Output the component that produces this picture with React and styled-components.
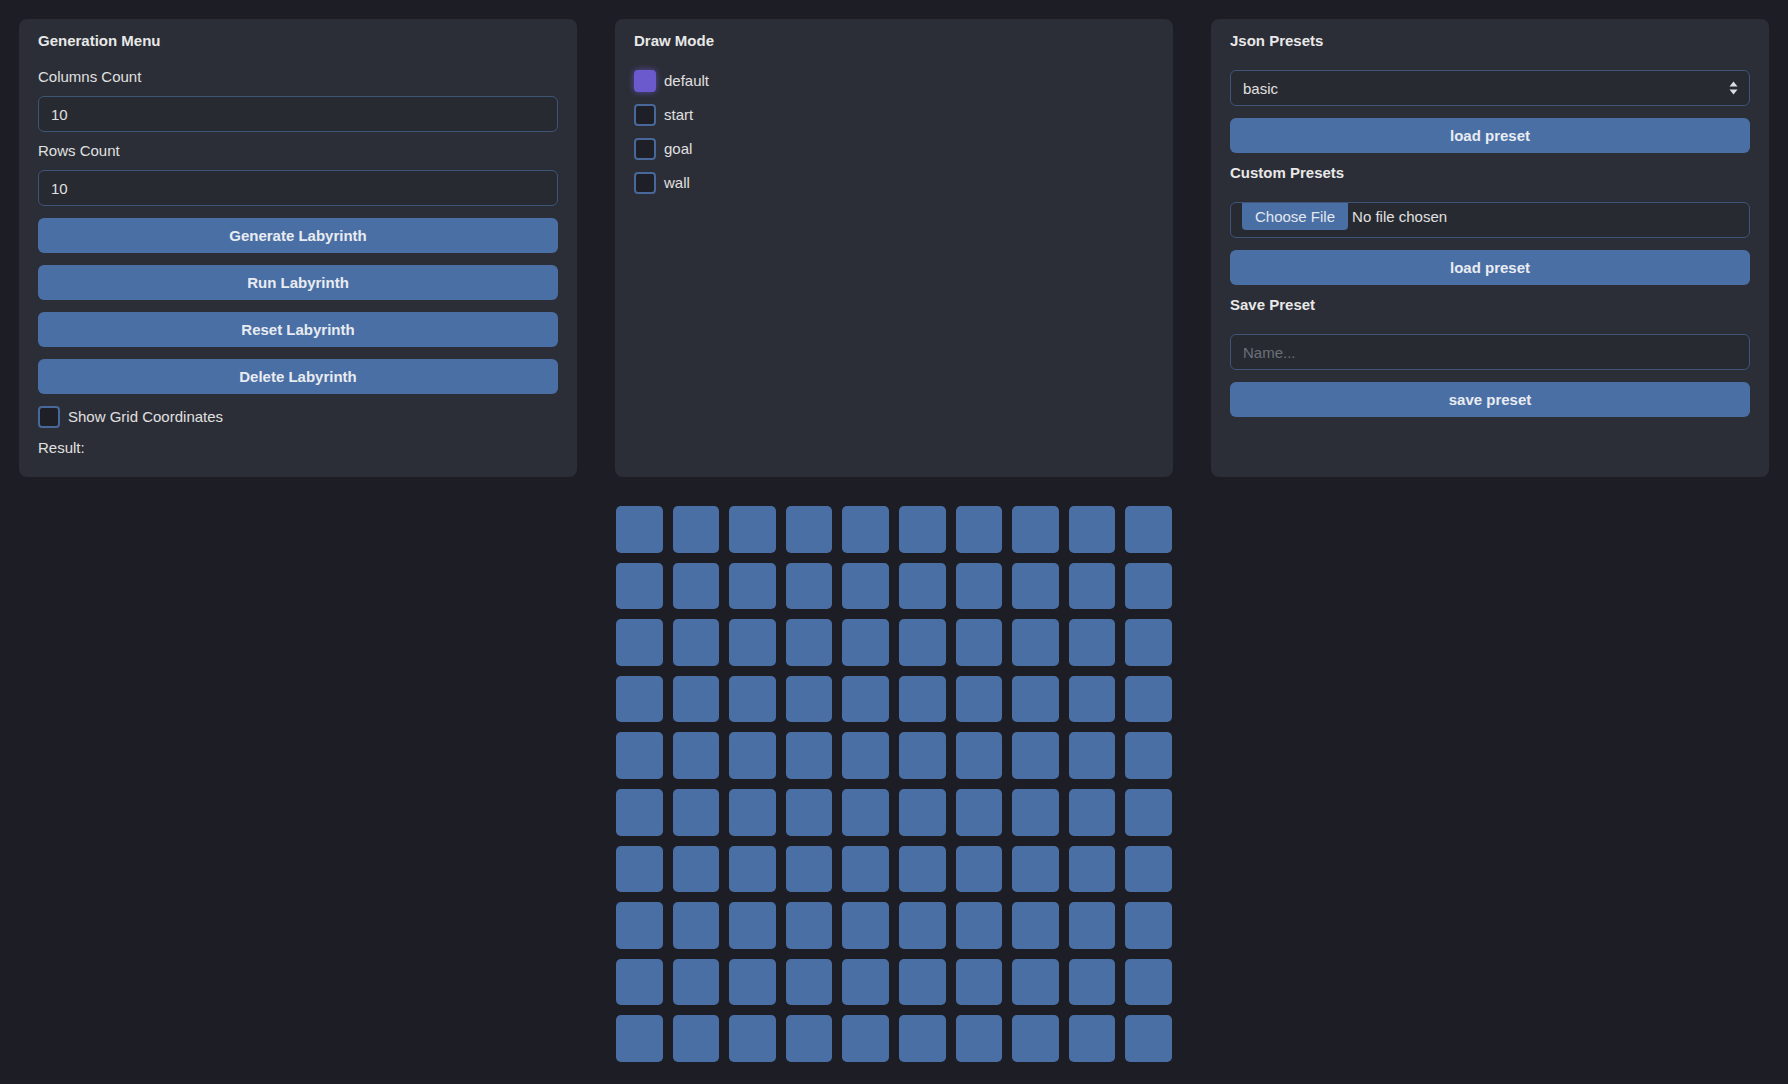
import React, { useState } from 'react';
import styled, { createGlobalStyle } from 'styled-components';

const GlobalStyle = createGlobalStyle`
  html, body {
    margin: 0;
    padding: 0;
    background: #1d1e25;
  }
  body {
    font-family: "Liberation Sans", Arial, sans-serif;
    color: #e0e0e0;
  }
  *, *::before, *::after { box-sizing: border-box; }
`;

const Page = styled.div`
  display: grid;
  grid-template-columns: repeat(3, 1fr);
  column-gap: 38px;
  row-gap: 29px;
  padding: 19px 19px 0;
`;

const Panel = styled.section`
  background: #2b2e36;
  border-radius: 8px;
  padding: 14px 19px 21px;
  display: flex;
  flex-direction: column;
  gap: 12px;
`;

const Heading = styled.h3`
  margin: 0 0 10px;
  font-size: 15px;
  font-weight: 700;
  line-height: 15px;
  color: #e8e8e8;
`;

const FieldLabel = styled.label`
  font-size: 15px;
  line-height: ${p => p.$lh || 14}px;
  color: #e0e0e0;
`;

const TextInput = styled.input`
  height: 36px;
  width: 100%;
  padding: 0 12px;
  background: #272a31;
  border: 1px solid #3f5578;
  border-radius: 6px;
  color: #e0e0e0;
  font: 15px "Liberation Sans", Arial, sans-serif;
  outline: none;
  &::placeholder { color: #6c7079; }
`;

const ActionButton = styled.button`
  height: 35px;
  width: 100%;
  border: none;
  border-radius: 6px;
  background: #4a6fa5;
  color: #e8ecf2;
  font: bold 15px "Liberation Sans", Arial, sans-serif;
  cursor: pointer;
  padding: 0;
`;

const CheckRow = styled.label`
  display: flex;
  align-items: center;
  gap: 8px;
  font-size: 15px;
  line-height: 22px;
  color: #e0e0e0;
  cursor: pointer;
`;

const CheckBox = styled.span`
  width: 22px;
  height: 22px;
  flex: none;
  border-radius: 4px;
  border: 2px solid ${p => (p.$checked ? '#6a5acd' : '#48679a')};
  background: ${p => (p.$checked ? '#6a5acd' : '#1e1f27')};
  box-shadow: ${p => (p.$checked ? '0 0 6px rgba(106, 90, 205, 0.75)' : 'none')};
`;

const SelectWrap = styled.div`
  position: relative;
`;

const Select = styled.select`
  appearance: none;
  -webkit-appearance: none;
  height: 36px;
  width: 100%;
  padding: 0 32px 0 12px;
  background: #272a31;
  border: 1px solid #3f5578;
  border-radius: 6px;
  color: #e0e0e0;
  font: 15px "Liberation Sans", Arial, sans-serif;
  outline: none;
`;

const SelectArrow = styled.svg`
  position: absolute;
  right: 12px;
  top: 50%;
  transform: translateY(-50%);
  pointer-events: none;
`;

const FileBox = styled.label`
  height: 36px;
  display: flex;
  align-items: flex-start;
  gap: 4px;
  padding: 0 11px;
  background: #272a31;
  border: 1px solid #3f5578;
  border-radius: 6px;
  font-size: 15px;
  line-height: 27px;
  color: #e0e0e0;
  cursor: pointer;
`;

const FileButton = styled.span`
  height: 27px;
  padding: 0 13px;
  background: #4a6fa5;
  border-radius: 0 0 4px 4px;
  color: #e2e8f0;
`;

const HiddenFile = styled.input`
  display: none;
`;

const Maze = styled.div`
  grid-column: 2;
  justify-self: center;
  width: 556px;
  display: grid;
  grid-template-columns: repeat(10, 1fr);
  gap: 10px;
`;

const Cell = styled.div`
  aspect-ratio: 1;
  border-radius: 5px;
  background: ${p => p.$color};
`;

const MODES = ['default', 'start', 'goal', 'wall'];
const MODE_COLORS = {
  default: '#4a6fa5',
  start: '#3f9a5b',
  goal: '#c0893a',
  wall: '#15161b',
};

export default function App() {
  const [mode, setMode] = useState('default');
  const [showCoords, setShowCoords] = useState(false);
  const [cols, setCols] = useState('10');
  const [rows, setRows] = useState('10');
  const [cells, setCells] = useState(() => Array(100).fill('default'));

  const paint = i => {
    setCells(prev => {
      const next = prev.slice();
      next[i] = mode;
      return next;
    });
  };

  return (
    <>
      <GlobalStyle />
      <Page>
        <Panel>
          <Heading>Generation Menu</Heading>
          <FieldLabel>Columns Count</FieldLabel>
          <TextInput value={cols} onChange={e => setCols(e.target.value)} />
          <FieldLabel>Rows Count</FieldLabel>
          <TextInput value={rows} onChange={e => setRows(e.target.value)} />
          <ActionButton>Generate Labyrinth</ActionButton>
          <ActionButton>Run Labyrinth</ActionButton>
          <ActionButton onClick={() => setCells(Array(100).fill('default'))}>Reset Labyrinth</ActionButton>
          <ActionButton>Delete Labyrinth</ActionButton>
          <CheckRow onClick={() => setShowCoords(v => !v)}>
            <CheckBox $checked={showCoords} />
            Show Grid Coordinates
          </CheckRow>
          <FieldLabel $lh={16}>Result:</FieldLabel>
        </Panel>

        <Panel>
          <Heading>Draw Mode</Heading>
          {MODES.map(m => (
            <CheckRow key={m} onClick={() => setMode(m)}>
              <CheckBox $checked={mode === m} />
              {m}
            </CheckRow>
          ))}
        </Panel>

        <Panel>
          <Heading>Json Presets</Heading>
          <SelectWrap>
            <Select defaultValue="basic">
              <option value="basic">basic</option>
            </Select>
            <SelectArrow width="9" height="14" viewBox="0 0 9 14">
              <path d="M4.5 0.5 L8.5 5.5 L0.5 5.5 Z" fill="#dcdfe4" />
              <path d="M4.5 13.5 L8.5 8.5 L0.5 8.5 Z" fill="#dcdfe4" />
            </SelectArrow>
          </SelectWrap>
          <ActionButton>load preset</ActionButton>
          <Heading>Custom Presets</Heading>
          <FileBox>
            <HiddenFile type="file" />
            <FileButton>Choose File</FileButton>
            No file chosen
          </FileBox>
          <ActionButton>load preset</ActionButton>
          <Heading>Save Preset</Heading>
          <TextInput placeholder="Name..." />
          <ActionButton>save preset</ActionButton>
        </Panel>

        <Maze>
          {cells.map((c, i) => (
            <Cell key={i} $color={MODE_COLORS[c]} onClick={() => paint(i)} />
          ))}
        </Maze>
      </Page>
    </>
  );
}
